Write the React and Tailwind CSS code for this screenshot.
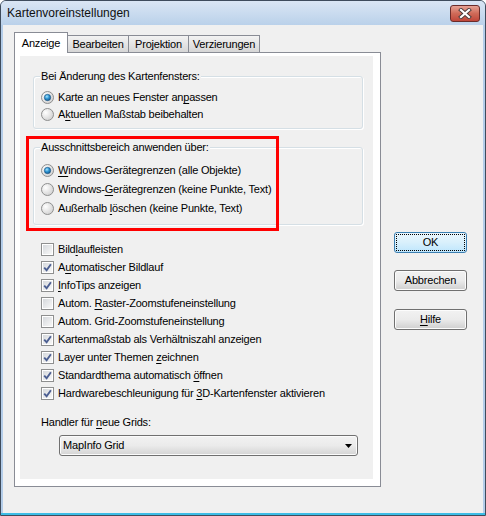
import React from 'react';

const font = "font-['Liberation_Sans',Arial,sans-serif]";

function Radio({ checked }) {
  return (
    <svg width="13" height="13" viewBox="0 0 13 13" className="shrink-0">
      <defs>
        <radialGradient id="radioBg" cx="0.35" cy="0.35" r="0.8">
          <stop offset="0" stopColor="#ffffff" />
          <stop offset="1" stopColor="#cbcbcb" />
        </radialGradient>
        <radialGradient id="radioDot" cx="0.4" cy="0.35" r="0.75">
          <stop offset="0" stopColor="#a6e6ff" />
          <stop offset="0.45" stopColor="#2e95d3" />
          <stop offset="1" stopColor="#0c4c80" />
        </radialGradient>
      </defs>
      <circle cx="6.5" cy="6.5" r="6" fill="url(#radioBg)" stroke="#8e8f8f" />
      {checked && <circle cx="6.5" cy="6.5" r="3.2" fill="url(#radioDot)" stroke="#1c527f" strokeWidth="0.6" />}
    </svg>
  );
}

function Check({ checked }) {
  return (
    <span className="w-[13px] h-[13px] border border-[#8e8f8f] bg-white p-px shrink-0 flex">
      <span className="flex-1 bg-gradient-to-br from-[#d6d9dd] to-[#f8f8f8] flex items-center justify-center">
        {checked && (
          <svg width="9" height="9" viewBox="0 0 9 9">
            <path d="M1.2 4.6 L3.6 7.2 L7.9 1.2" fill="none" stroke="#4c5f92" strokeWidth="1.9" />
          </svg>
        )}
      </span>
    </span>
  );
}

function RadioRow({ h, checked, children }) {
  return (
    <div className={`flex items-center gap-[4px] ${h}`}>
      <Radio checked={checked} />
      <span className="leading-[13px] whitespace-nowrap">{children}</span>
    </div>
  );
}

function CheckRow({ checked, children }) {
  return (
    <div className="flex items-center gap-[4px] h-[18px]">
      <Check checked={checked} />
      <span className="leading-[13px] whitespace-nowrap">{children}</span>
    </div>
  );
}

const U = ({ children }) => <span className="underline underline-offset-[2px]">{children}</span>;

function Button({ children, isDefault }) {
  if (isDefault) {
    return (
      <div className="w-[73px] h-[21px] border border-[#3c7fb1] rounded-[3px] bg-gradient-to-b from-[#eaf6fd] via-[#d9f0fc] to-[#bee6fd] p-[2px] flex">
        <div className="flex-1 outline outline-1 outline-dotted outline-black flex items-center justify-center leading-[13px]">
          {children}
        </div>
      </div>
    );
  }
  return (
    <div className="w-[73px] h-[21px] border border-[#707070] rounded-[3px] bg-gradient-to-b from-[#f2f2f2] via-[#ebebeb] to-[#cfcfcf] shadow-[inset_0_0_0_1px_#fcfcfc] flex items-center justify-center leading-[13px]">
      {children}
    </div>
  );
}

function Tab({ w, active, children }) {
  if (active) {
    return (
      <div className={`${w} h-[21px] -mb-px relative z-10 bg-white border border-b-0 border-[#898c95] flex items-center justify-center leading-[13px]`}>
        {children}
      </div>
    );
  }
  return (
    <div className={`${w} h-[17px] -ml-px bg-gradient-to-b from-[#f3f3f3] to-[#d6d6d6] border border-b-0 border-[#898c95] flex items-center justify-center leading-[13px]`}>
      {children}
    </div>
  );
}

export default function App() {
  return (
    <div className={`w-[486px] h-[516px] ${font} text-[11px] tracking-[-0.2px] text-black bg-[#b4cde9] border border-[#3f4c5c] rounded-t-[6px] shadow-[inset_0_-2px_0_#3cbde6] flex flex-col overflow-hidden`}>
      {/* Titelleiste */}
      <div className="h-[24px] shrink-0 flex items-start justify-between pl-[6px] pr-[5px] pt-[4px] bg-gradient-to-b from-[#dae6f4] to-[#bad1ea]">
        <span className="text-[12px] tracking-normal leading-[16px] text-[#101010]">Kartenvoreinstellungen</span>
        <div className="w-[30px] h-[17px] rounded-[3px] border border-[#6a2c2a] bg-gradient-to-b from-[#e6a294] via-[#cf6a58] to-[#c0463a] flex items-center justify-center">
          <svg width="14" height="11" viewBox="0 0 14 11">
            <path d="M3 2 L11 9 M11 2 L3 9" stroke="#4a3b3b" strokeWidth="4" strokeLinecap="square" />
            <path d="M3 2 L11 9 M11 2 L3 9" stroke="#ffffff" strokeWidth="2.2" strokeLinecap="square" />
          </svg>
        </div>
      </div>

      {/* Inhalt */}
      <div className="flex-1 mx-[2px] mb-[2px] bg-[#f0f0f0] flex pl-[11px] pt-[7px]">
        <div className="flex flex-col">
          <div className="flex items-end h-[20px]">
            <Tab w="w-[54px]" active>Anzeige</Tab>
            <Tab w="w-[62px]">Bearbeiten</Tab>
            <Tab w="w-[61px]">Projektion</Tab>
            <Tab w="w-[72px]">Verzierungen</Tab>
          </div>

          <div className="w-[367px] h-[435px] border border-[#898c95] bg-white pl-[5px] pt-[3px] pr-[7px] pb-[7px] flex">
            <div className="flex-1 bg-[#f0f0f0] relative flex flex-col">
              <div className="ml-[13px] mt-[20px] w-[330px] border border-[#d5dfe5] rounded-[3px] shadow-[inset_1px_1px_0_#ffffff,1px_1px_0_#ffffff] flex flex-col pl-[7px] pb-[5px]">
                <span className="self-start -mt-[7px] -ml-px px-px bg-[#f0f0f0] leading-[13px] h-[13px]">Bei Änderung des Kartenfensters:</span>
                <div className="mt-[6px]">
                  <RadioRow h="h-[17px]" checked>Karte an neues Fenster an<U>p</U>assen</RadioRow>
                  <RadioRow h="h-[17px]">A<U>k</U>tuellen Maßstab beibehalten</RadioRow>
                </div>
              </div>

              <div className="ml-[13px] mt-[18px] w-[330px] border border-[#d5dfe5] rounded-[3px] shadow-[inset_1px_1px_0_#ffffff,1px_1px_0_#ffffff] flex flex-col pl-[7px] pb-[6px]">
                <span className="self-start -mt-[7px] -ml-px px-px bg-[#f0f0f0] leading-[13px] h-[13px]">Ausschnittsbereich anwenden über:</span>
                <div className="mt-[7px]">
                  <RadioRow h="h-[19px]" checked><U>W</U>indows-Gerätegrenzen (alle Objekte)</RadioRow>
                  <RadioRow h="h-[19px]">Windows-<U>G</U>erätegrenzen (keine Punkte, Text)</RadioRow>
                  <RadioRow h="h-[19px]">Außerhalb <U>l</U>öschen (keine Punkte, Text)</RadioRow>
                </div>
              </div>

              <div className="ml-[21px] mt-[15px] flex flex-col">
                <CheckRow>Bild<U>l</U>aufleisten</CheckRow>
                <CheckRow checked>A<U>u</U>tomatischer Bildlauf</CheckRow>
                <CheckRow checked><U>I</U>nfoTips anzeigen</CheckRow>
                <CheckRow>Autom. <U>R</U>aster-Zoomstufeneinstellung</CheckRow>
                <CheckRow>Autom. Grid-Zoomstufeneinstellung</CheckRow>
                <CheckRow checked>Kartenmaßstab als Verhältniszahl anzeigen</CheckRow>
                <CheckRow checked>Layer unter Themen <U>z</U>eichnen</CheckRow>
                <CheckRow checked>Standardthema automatisch <U>ö</U>ffnen</CheckRow>
                <CheckRow checked>Hardwarebeschleunigung für <U>3</U>D-Kartenfenster aktivieren</CheckRow>
              </div>

              <div className="ml-[21px] mt-[13px] h-[14px] leading-[14px]">Handler für <U>n</U>eue Grids:</div>

              <div className="ml-[39px] mt-[6px] w-[299px] h-[21px] border border-[#707070] rounded-[3px] bg-gradient-to-b from-[#f2f2f2] via-[#ebebeb] to-[#d4d4d4] shadow-[inset_0_0_0_1px_#fbfbfb] flex items-center justify-between pl-[3px] pr-[5px]">
                <span className="leading-[13px]">MapInfo Grid</span>
                <svg width="7" height="4" viewBox="0 0 7 4">
                  <path d="M0 0 L7 0 L3.5 4 Z" fill="#000000" />
                </svg>
              </div>

              {/* rote Markierung */}
              <div className="absolute left-[6px] top-[80px] w-[253px] h-[95px] border-[3px] border-[#ff0000]" />
            </div>
          </div>
        </div>

        <div className="ml-[13px] mt-[200px] flex flex-col">
          <Button isDefault>OK</Button>
          <div className="mt-[17px]"><Button>Abbrechen</Button></div>
          <div className="mt-[18px]"><Button><U>H</U>ilfe</Button></div>
        </div>
      </div>
    </div>
  );
}
